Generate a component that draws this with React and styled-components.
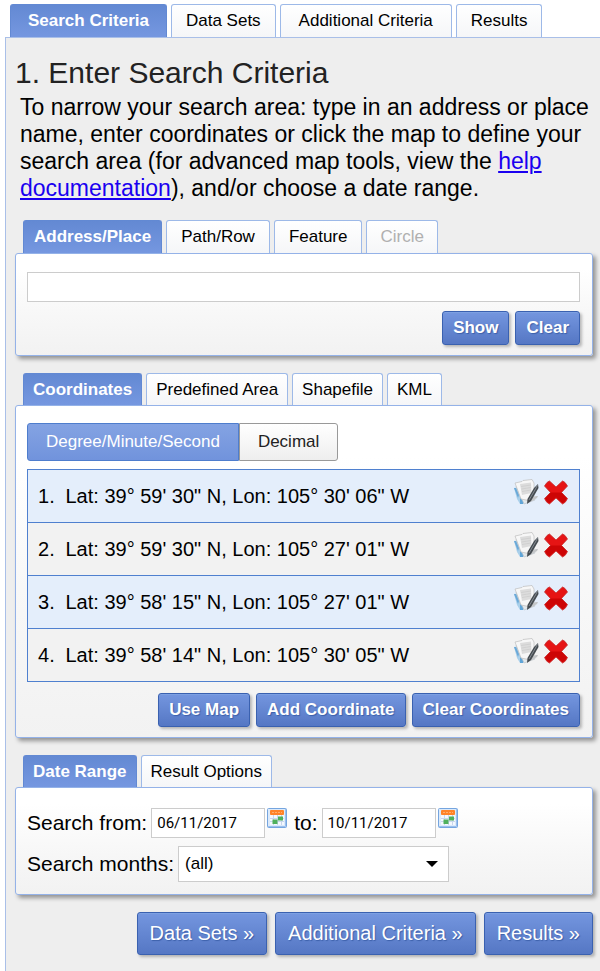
import React, { useState } from "react";
import styled, { createGlobalStyle, css } from "styled-components";

const Global = createGlobalStyle`
  * { box-sizing: border-box; }
  body {
    margin: 0;
    background: #fff;
    color: #000;
    font-family: "Liberation Sans", Arial, sans-serif;
  }
  button, input, select { font-family: inherit; margin: 0; }
`;

const Page = styled.div`
  display: flex;
  flex-direction: column;
  min-height: 100vh;
  padding: 4px 0 0 5px;
`;

const TabBar = styled.nav`
  display: flex;
  gap: 4px;
  padding: 0 ${(p) => (p.$main ? 5 : 8)}px;
`;

const TabButton = styled.button`
  height: ${(p) => (p.$short ? 32 : 33)}px;
  padding: 0 ${(p) => p.$pad}px;
  border: 1px solid #9db9e8;
  border-bottom: 0;
  border-radius: 3px 3px 0 0;
  background: linear-gradient(#fff, #f5f6f8);
  color: #000;
  font-size: 17px;
  line-height: 20px;
  white-space: nowrap;
  cursor: pointer;
  &:disabled { color: #b0b0b0; cursor: default; }
  ${(p) =>
    p.$active &&
    css`
      border-color: #6289d3;
      background: linear-gradient(#6389d3, #7597e0);
      color: #fff;
      font-weight: bold;
    `}
`;

const Sheet = styled.main`
  flex: 1;
  border: solid #a9bfe8;
  border-width: 1px 0 0 1px;
  background: #eee;
  padding: 18px 7px 14px 9px;
`;

const Title = styled.h1`
  margin: 0;
  color: #222;
  font-size: 30px;
  font-weight: normal;
  line-height: 34px;
`;

const Intro = styled.p`
  margin: 4px 0 18px 5px;
  font-size: 23px;
  line-height: 27px;
  a { color: #1a00f0; text-decoration-thickness: 2px; text-underline-offset: 2px; }
`;

const Section = styled.section`
  margin-bottom: 17px;
`;

const Panel = styled.div`
  border: 1px solid #94b2e8;
  border-radius: 3px;
  background: linear-gradient(#fff 15%, #f8f8f8 55%, #f2f2f2);
  box-shadow: 3px 3px 4px rgba(0, 0, 0, 0.38);
  padding: ${(p) => p.$top}px 12px ${(p) => p.$bottom}px 11px;
`;

const TextField = styled.input`
  display: block;
  width: 100%;
  height: 30px;
  padding: 0 6px;
  border: 1px solid #ccc;
  border-radius: 0;
  background: #fff;
  color: #000;
  font-size: 17px;
`;

const Actions = styled.div`
  display: flex;
  justify-content: flex-end;
  gap: ${(p) => (p.$large ? 8 : 6)}px;
  margin-top: ${(p) => p.$top}px;
`;

const ActionButton = styled.button`
  height: ${(p) => (p.$large ? 43 : 34)}px;
  padding: 0 ${(p) => (p.$large ? 12 : 10)}px;
  border: 1px solid #3a61b0;
  border-radius: 3px;
  background: linear-gradient(#7496df, #5577c4);
  box-shadow: inset 0 1px 0 #7da0e2, 2px 2px 3px rgba(0, 0, 0, 0.25);
  color: #fff;
  font-size: ${(p) => (p.$large ? 20 : 17)}px;
  font-weight: ${(p) => (p.$large ? "normal" : "bold")};
  text-shadow: 1px 1px 1px #3c60aa;
  white-space: nowrap;
  cursor: pointer;
`;

const Toggle = styled.div`
  display: flex;
`;

const ToggleButton = styled.button`
  height: 38px;
  padding: 0 18px;
  border: 1px solid #999;
  border-radius: 0 3px 3px 0;
  background: linear-gradient(#fff, #eee);
  color: #222;
  font-size: 17px;
  cursor: pointer;
  ${(p) =>
    p.$active &&
    css`
      border-color: #4e7dcd;
      border-radius: 3px 0 0 3px;
      background: linear-gradient(#84a3e3, #7193dc);
      color: #fff;
    `}
`;

const CoordTable = styled.table`
  width: 100%;
  margin-top: 8px;
  border-collapse: collapse;
  border: 1px solid #4f80cf;
  font-size: 20px;
`;

const CoordRow = styled.tr`
  height: 53px;
  border-top: 1px solid #4f80cf;
  background: #f2f2f2;
  &:nth-child(odd) { background: #e4eefb; }
`;

const Cell = styled.td`
  padding: 0 0 0 ${(p) => p.$left}px;
  width: ${(p) => p.$width || "auto"};
  white-space: nowrap;
`;

const CellTools = styled.div`
  display: flex;
  justify-content: flex-end;
  gap: 4px;
  padding: 0 11px 8px 0;
`;

const IconButton = styled.button`
  display: block;
  flex: none;
  padding: 0;
  border: 0;
  background: none;
  cursor: pointer;
  svg { display: block; }
`;

const FieldRow = styled.div`
  display: flex;
  align-items: center;
  & + & { margin-top: 8px; }
`;

const FieldLabel = styled.label`
  margin: 0 4px 0 ${(p) => (p.$next ? 7 : 0)}px;
  font-size: 21px;
  line-height: 28px;
  white-space: nowrap;
`;

const DateField = styled(TextField)`
  flex: 0 1 114px;
  min-width: 0;
  width: 114px;
  margin-right: 2px;
  padding: 0 5px;
  font-family: Roboto, sans-serif;
  font-size: 15px;
`;

const DateButton = styled(IconButton)`
  align-self: flex-start;
`;

const SelectBox = styled.div`
  display: grid;
  flex: 0 1 271px;
  align-items: center;
  & > * { grid-area: 1 / 1; }
  svg { justify-self: end; margin-right: 11px; pointer-events: none; }
`;

const Select = styled.select`
  appearance: none;
  width: 100%;
  height: 36px;
  padding: 0 28px 2px 6px;
  border: 1px solid #ccc;
  border-radius: 0;
  background: #fff;
  color: #000;
  font-size: 17px;
`;

function EditIcon() {
  return (
    <svg width="27" height="27" viewBox="0 0 27 27" aria-hidden="true">
      <path d="M1 9 L6 8 L11 24 L7 25 L4 20Z" fill="#a9cfea" />
      <path d="M1 9 L3 9 L6 16 L5 19Z" fill="#6ba9d8" />
      <path d="M7 19 L12 21 L10 25 L7 25Z" fill="#5fa5d8" />
      <path d="M3 7 L16 5 L22 21 L11 25Z" fill="#e3e8eb" stroke="#b5bec4" strokeWidth="0.6" />
      <path
        d="M2 4 L9 2.5 L10 1.5 L19 0.5 L21 4 L21 17 L18 22 L8 20 L5 12Z"
        fill="#f7f7f7"
        stroke="#bdbdbd"
        strokeWidth="0.7"
        strokeLinejoin="round"
      />
      <path d="M7 5 L18 3.5 L18.5 14 L9 16Z" fill="#dcdcdc" />
      <path d="M8 7.5 L18 6 M8.5 10 L18 8.5 M9 12.5 L18 11" stroke="#cdcdcd" strokeWidth="0.8" />
      <path d="M14 24 Q19 16 25 17 L24 19 L19 22Z" fill="#c3c5c7" />
      <path d="M25 5 L25.5 9 L18 22 L14 25 L14.5 20 L21 9Z" fill="#454b50" />
      <path d="M24.5 6 L22.5 10 L16 21" fill="none" stroke="#8b9298" strokeWidth="0.9" />
    </svg>
  );
}

function DeleteIcon() {
  return (
    <svg width="24" height="27" viewBox="0 0 24 27" aria-hidden="true">
      <path
        d="M5.5 2 L12 8 L18.5 2 Q21 2.5 23.5 7 L17.5 13.5 L23.5 19.5 Q21.5 24 18.5 25 L12 19 L5.5 25 Q2.5 24 0.5 19.5 L6.5 13.5 L0.5 7 Q3 2.5 5.5 2Z"
        fill="#e61414"
        stroke="#c43030"
        strokeWidth="0.8"
        strokeLinejoin="round"
      />
      <path
        d="M6.5 13.5 H17.5 L22.8 19.6 Q21 23.4 18.5 24.2 L12 18.2 L5.5 24.2 Q3 23.4 1.2 19.6Z"
        fill="#cd0505"
      />
    </svg>
  );
}

function CalendarIcon() {
  return (
    <svg width="20" height="20" viewBox="0 0 20 20" aria-hidden="true">
      <rect x="0.5" y="0.5" width="19" height="19" rx="1" fill="#dceafa" stroke="#75a5df" />
      <path d="M1 18.5 H18.5 V1" fill="none" stroke="#9cc0ee" />
      <path d="M3 7 H17 V17 H3Z" fill="#f4f8fd" />
      <path d="M3 10.5 H17 M3 13.5 H17 M6.5 7 V17 M10.5 7 V17 M14.5 7 V17" stroke="#c9d6ed" />
      <rect x="3" y="2" width="14" height="5" rx="1" fill="#ff8328" />
      <path d="M5 4.5 H15" stroke="#ffad70" strokeDasharray="2 1" />
      <path d="M11 8.5 H16 V12.5 H11Z M5.5 11.5 H10.5 V16 H5.5Z" fill="#4fb05c" />
    </svg>
  );
}

function Tabs({ items, label, main, short }) {
  const [active, setActive] = useState(items[0].name);
  return (
    <TabBar $main={main} aria-label={label}>
      {items.map(({ name, pad, disabled }) => (
        <TabButton
          key={name}
          type="button"
          $active={name === active}
          $pad={pad}
          $short={short}
          disabled={disabled}
          aria-pressed={name === active}
          onClick={() => setActive(name)}
        >
          {name}
        </TabButton>
      ))}
    </TabBar>
  );
}

const mainTabs = [
  { name: "Search Criteria", pad: 17 },
  { name: "Data Sets", pad: 14 },
  { name: "Additional Criteria", pad: 18 },
  { name: "Results", pad: 14 },
];
const placeTabs = [
  { name: "Address/Place", pad: 10 },
  { name: "Path/Row", pad: 14 },
  { name: "Feature", pad: 14 },
  { name: "Circle", pad: 13, disabled: true },
];
const areaTabs = [
  { name: "Coordinates", pad: 9 },
  { name: "Predefined Area", pad: 9 },
  { name: "Shapefile", pad: 9 },
  { name: "KML", pad: 9 },
];
const rangeTabs = [
  { name: "Date Range", pad: 9 },
  { name: "Result Options", pad: 9 },
];
const coordinates = [
  `Lat: 39° 59' 30" N, Lon: 105° 30' 06" W`,
  `Lat: 39° 59' 30" N, Lon: 105° 27' 01" W`,
  `Lat: 39° 58' 15" N, Lon: 105° 27' 01" W`,
  `Lat: 39° 58' 14" N, Lon: 105° 30' 05" W`,
];

export default function App() {
  const [format, setFormat] = useState("dms");
  return (
    <>
      <Global />
      <Page>
        <Tabs items={mainTabs} label="Steps" main />
        <Sheet>
          <Title>1. Enter Search Criteria</Title>
          <Intro>
            To narrow your search area: type in an address or place name, enter coordinates or
            click the map to define your search area (for advanced map tools, view the{" "}
            <a href="#help">help documentation</a>), and/or choose a date range.
          </Intro>

          <Section>
            <Tabs items={placeTabs} label="Place search" />
            <Panel $top={18} $bottom={10}>
              <TextField type="text" aria-label="Address or place" />
              <Actions $top={9}>
                <ActionButton type="button">Show</ActionButton>
                <ActionButton type="button">Clear</ActionButton>
              </Actions>
            </Panel>
          </Section>

          <Section>
            <Tabs items={areaTabs} label="Area" short />
            <Panel $top={17} $bottom={10}>
              <Toggle>
                <ToggleButton type="button" $active={format === "dms"} onClick={() => setFormat("dms")}>
                  Degree/Minute/Second
                </ToggleButton>
                <ToggleButton type="button" $active={format === "dec"} onClick={() => setFormat("dec")}>
                  Decimal
                </ToggleButton>
              </Toggle>
              <CoordTable>
                <tbody>
                  {coordinates.map((text, i) => (
                    <CoordRow key={text}>
                      <Cell $left={10} $width="38px">{i + 1}.</Cell>
                      <Cell $left={0}>{text}</Cell>
                      <Cell $left={0}>
                        <CellTools>
                          <IconButton type="button" aria-label={`Edit coordinate ${i + 1}`}>
                            <EditIcon />
                          </IconButton>
                          <IconButton type="button" aria-label={`Delete coordinate ${i + 1}`}>
                            <DeleteIcon />
                          </IconButton>
                        </CellTools>
                      </Cell>
                    </CoordRow>
                  ))}
                </tbody>
              </CoordTable>
              <Actions $top={11}>
                <ActionButton type="button">Use Map</ActionButton>
                <ActionButton type="button">Add Coordinate</ActionButton>
                <ActionButton type="button">Clear Coordinates</ActionButton>
              </Actions>
            </Panel>
          </Section>

          <Section>
            <Tabs items={rangeTabs} label="Options" short />
            <Panel $top={20} $bottom={12}>
              <FieldRow>
                <FieldLabel htmlFor="from">Search from:</FieldLabel>
                <DateField id="from" type="text" defaultValue="06/11/2017" />
                <DateButton type="button" aria-label="Pick start date">
                  <CalendarIcon />
                </DateButton>
                <FieldLabel $next htmlFor="to">to:</FieldLabel>
                <DateField id="to" type="text" defaultValue="10/11/2017" />
                <DateButton type="button" aria-label="Pick end date">
                  <CalendarIcon />
                </DateButton>
              </FieldRow>
              <FieldRow>
                <FieldLabel htmlFor="months">Search months:</FieldLabel>
                <SelectBox>
                  <Select id="months" defaultValue="all">
                    <option value="all">(all)</option>
                  </Select>
                  <svg width="12" height="6" viewBox="0 0 12 6" aria-hidden="true">
                    <path d="M0 0 H12 L6 6Z" fill="#000" />
                  </svg>
                </SelectBox>
              </FieldRow>
            </Panel>
          </Section>

          <Actions $large $top={0}>
            <ActionButton $large type="button">Data Sets »</ActionButton>
            <ActionButton $large type="button">Additional Criteria »</ActionButton>
            <ActionButton $large type="button">Results »</ActionButton>
          </Actions>
        </Sheet>
      </Page>
    </>
  );
}
